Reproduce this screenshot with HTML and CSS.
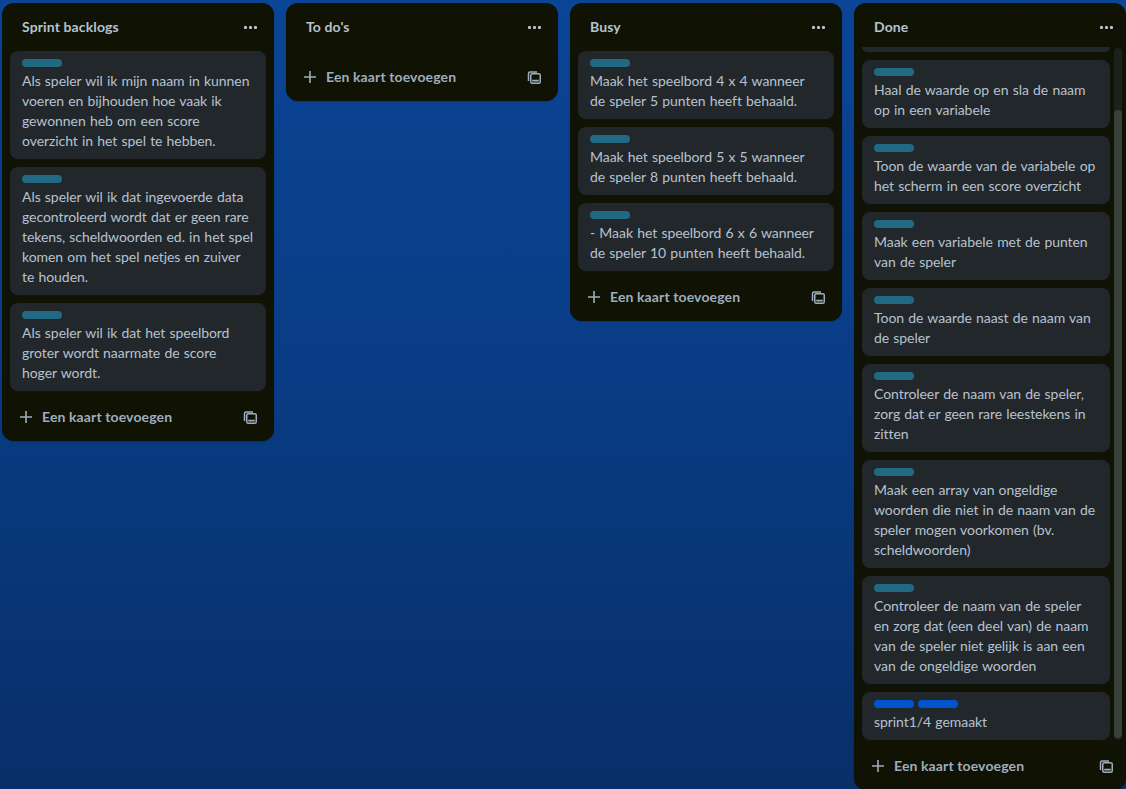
FILE: index.html
```html
<!DOCTYPE html>
<html lang="nl">
<head>
<meta charset="utf-8">
<title>Board</title>
<link rel="stylesheet" href="styles.css">
</head>
<body>
<div class="board">

  <section class="list">
    <header class="list-header">
      <h2 class="list-title">Sprint backlogs</h2>
      <button class="icon-btn" aria-label="Lijstacties"><svg width="16" height="16" viewBox="0 0 16 16"><rect x="2" y="7" width="3" height="3" rx="1"/><rect x="7" y="7" width="3" height="3" rx="1"/><rect x="12" y="7" width="3" height="3" rx="1"/></svg></button>
    </header>
    <div class="cards">
      <article class="card"><div class="labels"><span class="label teal"></span></div><p class="card-text">Als speler wil ik mijn naam in kunnen voeren en bijhouden hoe vaak ik gewonnen heb om een score overzicht in het spel te hebben.</p></article>
      <article class="card"><div class="labels"><span class="label teal"></span></div><p class="card-text">Als speler wil ik dat ingevoerde data gecontroleerd wordt dat er geen rare tekens, scheldwoorden ed. in het spel komen om het spel netjes en zuiver te houden.</p></article>
      <article class="card"><div class="labels"><span class="label teal"></span></div><p class="card-text">Als speler wil ik dat het speelbord groter wordt naarmate de score hoger wordt.</p></article>
    </div>
    <footer class="list-footer">
      <button class="add-btn"><svg width="16" height="16" viewBox="0 0 16 16"><path d="M8 2v12M2 8h12" stroke-width="1.6"/></svg><span>Een kaart toevoegen</span></button>
      <button class="icon-btn tmpl" aria-label="Maken vanuit sjabloon"><svg width="16" height="16" viewBox="0 0 16 16"><path class="back" d="M2.5 12V4.5a1.5 1.5 0 0 1 1.5-1.5h7"/><rect class="front" x="4.75" y="4.75" width="9.5" height="9.5" rx="1.5"/><rect class="bar" x="6.25" y="10.75" width="6.5" height="1.75"/></svg></button>
    </footer>
  </section>

  <section class="list">
    <header class="list-header">
      <h2 class="list-title">To do's</h2>
      <button class="icon-btn" aria-label="Lijstacties"><svg width="16" height="16" viewBox="0 0 16 16"><rect x="2" y="7" width="3" height="3" rx="1"/><rect x="7" y="7" width="3" height="3" rx="1"/><rect x="12" y="7" width="3" height="3" rx="1"/></svg></button>
    </header>
    <div class="cards"></div>
    <footer class="list-footer">
      <button class="add-btn"><svg width="16" height="16" viewBox="0 0 16 16"><path d="M8 2v12M2 8h12" stroke-width="1.6"/></svg><span>Een kaart toevoegen</span></button>
      <button class="icon-btn tmpl" aria-label="Maken vanuit sjabloon"><svg width="16" height="16" viewBox="0 0 16 16"><path class="back" d="M2.5 12V4.5a1.5 1.5 0 0 1 1.5-1.5h7"/><rect class="front" x="4.75" y="4.75" width="9.5" height="9.5" rx="1.5"/><rect class="bar" x="6.25" y="10.75" width="6.5" height="1.75"/></svg></button>
    </footer>
  </section>

  <section class="list">
    <header class="list-header">
      <h2 class="list-title">Busy</h2>
      <button class="icon-btn" aria-label="Lijstacties"><svg width="16" height="16" viewBox="0 0 16 16"><rect x="2" y="7" width="3" height="3" rx="1"/><rect x="7" y="7" width="3" height="3" rx="1"/><rect x="12" y="7" width="3" height="3" rx="1"/></svg></button>
    </header>
    <div class="cards">
      <article class="card"><div class="labels"><span class="label teal"></span></div><p class="card-text">Maak het speelbord 4 x 4 wanneer de speler 5 punten heeft behaald.</p></article>
      <article class="card"><div class="labels"><span class="label teal"></span></div><p class="card-text">Maak het speelbord 5 x 5 wanneer de speler 8 punten heeft behaald.</p></article>
      <article class="card"><div class="labels"><span class="label teal"></span></div><p class="card-text">- Maak het speelbord 6 x 6 wanneer de speler 10 punten heeft behaald.</p></article>
    </div>
    <footer class="list-footer">
      <button class="add-btn"><svg width="16" height="16" viewBox="0 0 16 16"><path d="M8 2v12M2 8h12" stroke-width="1.6"/></svg><span>Een kaart toevoegen</span></button>
      <button class="icon-btn tmpl" aria-label="Maken vanuit sjabloon"><svg width="16" height="16" viewBox="0 0 16 16"><path class="back" d="M2.5 12V4.5a1.5 1.5 0 0 1 1.5-1.5h7"/><rect class="front" x="4.75" y="4.75" width="9.5" height="9.5" rx="1.5"/><rect class="bar" x="6.25" y="10.75" width="6.5" height="1.75"/></svg></button>
    </footer>
  </section>

  <section class="list list-done">
    <header class="list-header">
      <h2 class="list-title">Done</h2>
      <button class="icon-btn" aria-label="Lijstacties"><svg width="16" height="16" viewBox="0 0 16 16"><rect x="2" y="7" width="3" height="3" rx="1"/><rect x="7" y="7" width="3" height="3" rx="1"/><rect x="12" y="7" width="3" height="3" rx="1"/></svg></button>
    </header>
    <div class="scroll-area">
      <div class="cards scrolled">
        <div class="card-tail"></div>
        <article class="card"><div class="labels"><span class="label teal"></span></div><p class="card-text">Haal de waarde op en sla de naam op in een variabele</p></article>
        <article class="card"><div class="labels"><span class="label teal"></span></div><p class="card-text">Toon de waarde van de variabele op het scherm in een score overzicht</p></article>
        <article class="card"><div class="labels"><span class="label teal"></span></div><p class="card-text">Maak een variabele met de punten van de speler</p></article>
        <article class="card"><div class="labels"><span class="label teal"></span></div><p class="card-text">Toon de waarde naast de naam van de speler</p></article>
        <article class="card"><div class="labels"><span class="label teal"></span></div><p class="card-text">Controleer de naam van de speler, zorg dat er geen rare leestekens in zitten</p></article>
        <article class="card"><div class="labels"><span class="label teal"></span></div><p class="card-text">Maak een array van ongeldige woorden die niet in de naam van de speler mogen voorkomen (bv. scheldwoorden)</p></article>
        <article class="card"><div class="labels"><span class="label teal"></span></div><p class="card-text">Controleer de naam van de speler en zorg dat (een deel van) de naam van de speler niet gelijk is aan een van de ongeldige woorden</p></article>
        <article class="card"><div class="labels"><span class="label blue"></span><span class="label blue"></span></div><p class="card-text">sprint1/4 gemaakt</p></article>
      </div>
      <div class="scrollbar"><div class="thumb"></div></div>
    </div>
    <footer class="list-footer">
      <button class="add-btn"><svg width="16" height="16" viewBox="0 0 16 16"><path d="M8 2v12M2 8h12" stroke-width="1.6"/></svg><span>Een kaart toevoegen</span></button>
      <button class="icon-btn tmpl" aria-label="Maken vanuit sjabloon"><svg width="16" height="16" viewBox="0 0 16 16"><path class="back" d="M2.5 12V4.5a1.5 1.5 0 0 1 1.5-1.5h7"/><rect class="front" x="4.75" y="4.75" width="9.5" height="9.5" rx="1.5"/><rect class="bar" x="6.25" y="10.75" width="6.5" height="1.75"/></svg></button>
    </footer>
  </section>

</div>
</body>
</html>
```

FILE: styles.css
```css
* { box-sizing: border-box; }

html, body {
  margin: 0;
  height: 100%;
}

body {
  overflow: hidden;
  font-family: Lato, "Noto Sans", sans-serif;
  font-size: 14px;
  line-height: 20px;
  letter-spacing: 0.12px;
  color: #b6c2cf;
  background: linear-gradient(to bottom, #0b4596 0%, #093d86 45%, #082f68 100%);
}

.board {
  display: flex;
  align-items: flex-start;
  gap: 12px;
  padding: 3px 0 0 2px;
}

.list {
  flex: 0 0 272px;
  width: 272px;
  background: #101204;
  border-radius: 12px;
  padding: 4px 8px 8px;
  box-shadow: 0 1px 1px rgba(9, 30, 66, 0.25), 0 0 1px rgba(9, 30, 66, 0.31);
}

.list-header {
  display: flex;
  align-items: center;
  justify-content: space-between;
  height: 40px;
  padding: 0 0 0 12px;
}

.list-title {
  margin: 0;
  font-size: 14px;
  font-weight: 700;
  line-height: 20px;
  color: #b6c2cf;
}

.icon-btn {
  display: flex;
  align-items: center;
  justify-content: center;
  width: 32px;
  height: 32px;
  padding: 0;
  border: 0;
  border-radius: 8px;
  background: transparent;
  fill: #b6c2cf;
  color: #b6c2cf;
}

.cards {
  display: flex;
  flex-direction: column;
  gap: 8px;
  padding-top: 4px;
}

.card {
  background: #22272b;
  border-radius: 8px;
  padding: 8px 12px 8px;
  box-shadow: 0 1px 1px rgba(9, 30, 66, 0.25);
}

.labels {
  display: flex;
  gap: 4px;
  margin-bottom: 4px;
}

.label {
  display: block;
  width: 40px;
  height: 8px;
  border-radius: 4px;
}

.label.teal { background: #206a83; }
.label.blue { background: #0055cc; }

.card-text {
  margin: 0;
  color: #b6c2cf;
  font-size: 14px;
  line-height: 20px;
  letter-spacing: -0.06px;
  word-spacing: 0.7px;
}

.list-footer {
  display: flex;
  align-items: center;
  justify-content: space-between;
  margin-top: 10px;
}

.add-btn {
  display: flex;
  align-items: center;
  gap: 8px;
  height: 32px;
  padding: 6px 8px;
  border: 0;
  border-radius: 8px;
  background: transparent;
  font-family: inherit;
  font-size: 14px;
  font-weight: 700;
  line-height: 20px;
  letter-spacing: inherit;
  color: #9fadbc;
  stroke: #9fadbc;
  fill: none;
}

.tmpl svg .back,
.tmpl svg .front {
  fill: none;
  stroke: #9fadbc;
  stroke-width: 1.5;
}

.tmpl svg .bar { fill: #9fadbc; }

/* Done list with scrolled card area */
.list-done { padding-right: 4px; }

.scroll-area {
  display: flex;
  gap: 4px;
  height: 693px;
  overflow: hidden;
}

.cards.scrolled {
  flex: 1;
  padding-top: 0;
}

.card-tail {
  flex: 0 0 5px;
  background: #22272b;
  border-radius: 0 0 8px 8px;
}

.scrollbar {
  flex: 0 0 8px;
  margin-top: 1px;
  background: #1c2219;
  border-radius: 4px;
}

.thumb {
  margin-top: 62px;
  height: 628px;
  background: #37413a;
  border-radius: 4px;
}
```
